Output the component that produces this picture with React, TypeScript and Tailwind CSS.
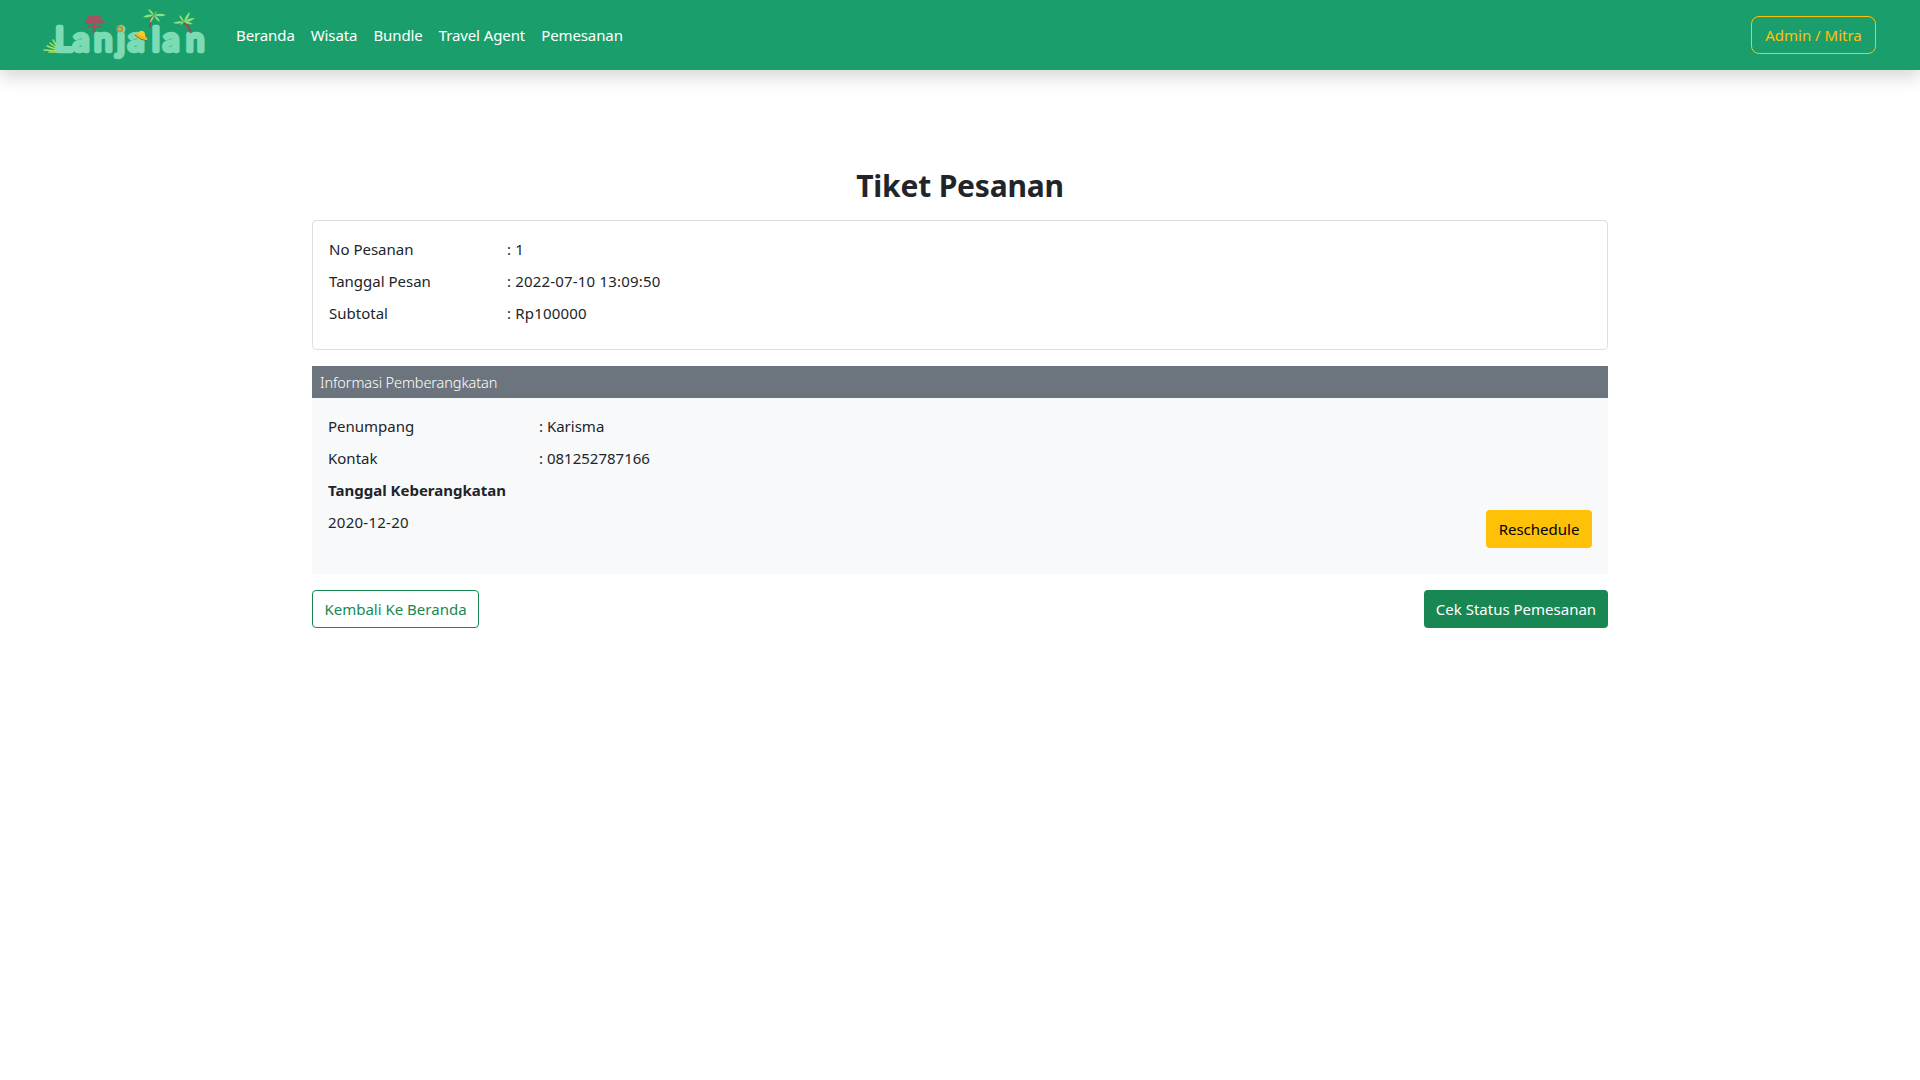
const font = "font-['Noto_Sans',sans-serif]"

// leaf from the palm crown out to a tip
function leaf(cx: number, cy: number, tx: number, ty: number) {
  const mx = (cx + tx) / 2
  const my = (cy + ty) / 2
  const dx = (ty - cy) * 0.22
  const dy = (cx - tx) * 0.22
  return `M${cx} ${cy} Q${mx + dx} ${my + dy} ${tx} ${ty} Q${mx - dx} ${my - dy} ${cx} ${cy} Z`
}

function Logo() {
  const palmA = [[101, 17], [106, 9], [115, 11], [124, 15], [118, 22], [108, 23]]
  const palmB = [[131, 23], [137, 15], [148, 12], [153, 18], [151, 24], [138, 25]]
  return (
    <svg width="166" height="70" viewBox="0 0 166 70" className="shrink-0">
      {/* grass */}
      <g stroke="#a4e25f" strokeWidth="1.5" fill="none" strokeLinecap="round">
        <path d="M16 51 L2 50" />
        <path d="M16 50 L5 46" />
        <path d="M16 49 L8 43" />
        <path d="M16 48 L11 40" />
        <path d="M17 52 L7 52" />
      </g>
      {/* sign post */}
      <rect x="51" y="15" width="2.4" height="18" fill="#8f5a5e" />
      <path d="M45 16 H58 L60 17.5 L58 19 H45 Z" fill="#a3525f" />
      <path d="M43 20 H60 L63 22 L60 24 H43 Z" fill="#a3525f" />
      <path d="M46 25 H60 V28 H46 Z" fill="#a3525f" />
      {/* wordmark */}
      <text
        y="51"
        fontFamily="Lato, sans-serif"
        fontWeight="400"
        fontSize="33"
        fill="#7bdbb5"
        stroke="#7bdbb5"
        strokeWidth="4.4"
        strokeLinejoin="round"
      >
        <tspan x="13">L</tspan>
        <tspan x="31">a</tspan>
        <tspan x="52">n</tspan>
        <tspan x="75">j</tspan>
        <tspan x="86">a</tspan>
        <tspan x="110">l</tspan>
        <tspan x="121">a</tspan>
        <tspan x="144">n</tspan>
      </text>
      {/* ring above the j */}
      <circle cx="78" cy="29" r="2.4" fill="none" stroke="#c98b2f" strokeWidth="1.8" />
      <circle cx="79" cy="28" r="1" fill="#5fbf6a" />
      {/* hat */}
      <ellipse cx="99" cy="37" rx="6.8" ry="2.6" fill="#f6b91d" transform="rotate(22 99 37)" />
      <path d="M96 34 Q97 30 101 31 Q104 33 103 37 Z" fill="#f9c92e" />
      <path d="M93 35 Q98 40 105 41" stroke="#1d7f7f" strokeWidth="0.9" fill="none" />
      {/* palms */}
      <path d="M108 28 Q108 20 112 15" stroke="#8a5158" strokeWidth="2.2" fill="none" />
      {palmA.map(([x, y]) => (
        <path key={`${x}-${y}`} d={leaf(112, 15, x, y)} fill="#8ee27a" />
      ))}
      <path d="M149 33 Q147 27 142 22" stroke="#8a5158" strokeWidth="2.2" fill="none" />
      {palmB.map(([x, y]) => (
        <path key={`${x}-${y}`} d={leaf(142, 22, x, y)} fill="#8ee27a" />
      ))}
    </svg>
  )
}

function Row({ label, value, labelWidth, valueClass }: { label: string; value: string; labelWidth: string; valueClass?: string }) {
  return (
    <div className="mb-2 flex h-6 items-center">
      <span className={labelWidth}>{label}</span>
      <span className={valueClass}>: {value}</span>
    </div>
  )
}

export default function App() {
  return (
    <div className={`${font} min-h-screen bg-white text-[15px] leading-6 text-[#212529]`}>
      <nav className="flex h-[70px] items-center bg-[#1a9f6c] pl-[42px] pr-[44px] shadow-[0_8px_16px_rgba(0,0,0,0.15)]">
        <Logo />
        <ul className="ml-[28px] flex gap-4 tracking-[-0.1px] text-white">
          <li>Beranda</li>
          <li>Wisata</li>
          <li>Bundle</li>
          <li>Travel Agent</li>
          <li>Pemesanan</li>
        </ul>
        <button className="ml-auto h-[38px] w-[125px] rounded-lg border border-[#ffc107] text-[#ffc107]">Admin / Mitra</button>
      </nav>

      <main className="mx-auto w-[1296px] pt-[97px]">
        <h1 className="mb-[15px] text-center text-[30px] font-bold leading-[38px] tracking-[-0.2px]">Tiket Pesanan</h1>

        <section className="rounded border border-[#dfdfdf] p-4">
          <Row label="No Pesanan" value="1" labelWidth="w-[178px]" valueClass="tracking-[0.18px]" />
          <Row label="Tanggal Pesan" value="2022-07-10 13:09:50" labelWidth="w-[178px]" valueClass="tracking-[0.18px]" />
          <Row label="Subtotal" value="Rp100000" labelWidth="w-[178px]" valueClass="tracking-[0.18px]" />
        </section>

        <section className="mt-4">
          <div className="flex h-8 items-center bg-[#6c757d] px-2 text-[14.5px] font-light tracking-[-0.1px] text-white">
            Informasi Pemberangkatan
          </div>
          <div className="flex items-end justify-between bg-[#f8f9fa] px-4 pb-[26px] pt-4">
            <div className="pb-[6px]">
              <Row label="Penumpang" value="Karisma" labelWidth="w-[211px]" />
              <Row label="Kontak" value="081252787166" labelWidth="w-[211px]" />
              <div className="mb-2 h-6 font-bold">Tanggal Keberangkatan</div>
              <div className="mb-2 h-6 tracking-[0.25px]">2020-12-20</div>
            </div>
            <button className="h-[38px] w-[106px] rounded bg-[#ffc107] text-black">Reschedule</button>
          </div>
        </section>

        <div className="mt-4 flex justify-between">
          <button className="h-[38px] w-[167px] rounded border border-[#198754] text-[#198754]">Kembali Ke Beranda</button>
          <button className="h-[38px] w-[184px] rounded bg-[#198754] text-white">Cek Status Pemesanan</button>
        </div>
      </main>
    </div>
  )
}
